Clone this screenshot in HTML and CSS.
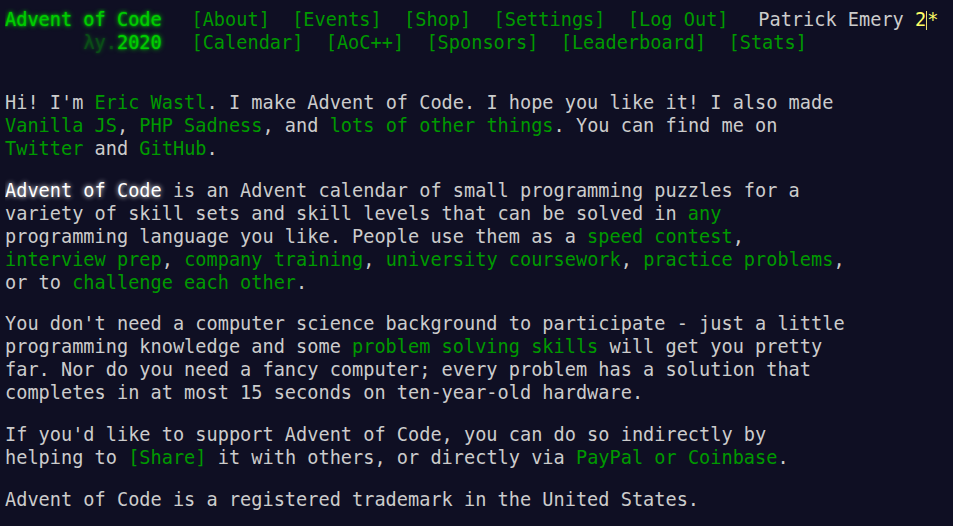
FILE: index.html
```html
<!DOCTYPE html>
<html lang="en">
<head>
<meta charset="utf-8">
<title>About - Advent of Code 2020</title>
<link rel="stylesheet" href="styles.css">
</head>
<body>
<header class="site-header">
  <div class="header-row">
    <h1 class="title"><a href="#">Advent of Code</a></h1>
    <nav><ul class="nav-list"><li><a href="#">[About]</a></li><li><a href="#">[Events]</a></li><li><a href="#">[Shop]</a></li><li><a href="#">[Settings]</a></li><li><a href="#">[Log Out]</a></li></ul></nav>
    <div class="user">Patrick Emery <span class="star-count">2<span class="caret"></span>*</span></div>
  </div>
  <div class="header-row">
    <h1 class="title title-event">&nbsp;&nbsp;&nbsp;&nbsp;&nbsp;&nbsp;&nbsp;<span class="event-wrap">λy.</span><a href="#">2020</a></h1>
    <nav><ul class="nav-list"><li><a href="#">[Calendar]</a></li><li><a href="#">[AoC++]</a></li><li><a href="#">[Sponsors]</a></li><li><a href="#">[Leaderboard]</a></li><li><a href="#">[Stats]</a></li></ul></nav>
  </div>
</header>
<main class="content">
  <p>Hi! I'm <a href="#">Eric Wastl</a>. I make Advent of Code. I hope you like it! I also made <a href="#">Vanilla JS</a>, <a href="#">PHP Sadness</a>, and <a href="#">lots of other things</a>. You can find me on <a href="#">Twitter</a> and <a href="#">GitHub</a>.</p>
  <p><em>Advent of Code</em> is an Advent calendar of small programming puzzles for a variety of skill sets and skill levels that can be solved in <a href="#">any</a> programming language you like. People use them as a <a href="#">speed contest</a>, <a href="#">interview prep</a>, <a href="#">company training</a>, <a href="#">university coursework</a>, <a href="#">practice problems</a>, or to <a href="#">challenge each other</a>.</p>
  <p>You don't need a computer science background to participate - just a little programming knowledge and some <a href="#">problem solving skills</a> will get you pretty far. Nor do you need a fancy computer; every problem has a solution that completes in at most 15 seconds on ten&#8209;year&#8209;old hardware.</p>
  <p>If you'd like to support Advent of Code, you can do so indirectly by helping to <a href="#">[Share]</a> it with others, or directly via <a href="#">PayPal or Coinbase</a>.</p>
  <p>Advent of Code is a registered trademark in the United States.</p>
</main>
</body>
</html>
```
FILE: styles.css
```css
html, body {
  background: #0f0f23;
}
body {
  margin: 8px 5px;
  color: #cccccc;
  font-family: "DejaVu Sans Mono", "Liberation Mono", monospace;
  font-size: 18.6px;
  line-height: 23px;
}
a {
  color: #009900;
  text-decoration: none;
}
.site-header {
  white-space: nowrap;
  margin-bottom: 2em;
}
.header-row {
  display: flex;
  align-items: center;
  height: 23px;
}
.title {
  margin: 0;
  padding-right: 1em;
  font-size: 1em;
  font-weight: normal;
  width: 14ch;
}
.title a,
.title span {
  color: #00cc00;
  text-shadow: 0 0 2px #00cc00, 0 0 5px #00cc00;
}
.title .event-wrap {
  opacity: 0.33;
}
.nav-list {
  list-style: none;
  margin: 0;
  padding: 0;
  display: flex;
}
.nav-list li {
  padding: 0 0.6em;
}
.user {
  padding-left: 1em;
  color: #cccccc;
}
.star-count {
  color: #ffff66;
}
.caret {
  display: inline-block;
  width: 0;
  height: 19px;
  border-left: 1px solid #e8e070;
  vertical-align: -4px;
}
.content p {
  max-width: 845px;
  margin: 1em 0;
}
em {
  color: #ffffff;
  font-style: normal;
  text-shadow: 0 0 5px #ffffff;
}
```
